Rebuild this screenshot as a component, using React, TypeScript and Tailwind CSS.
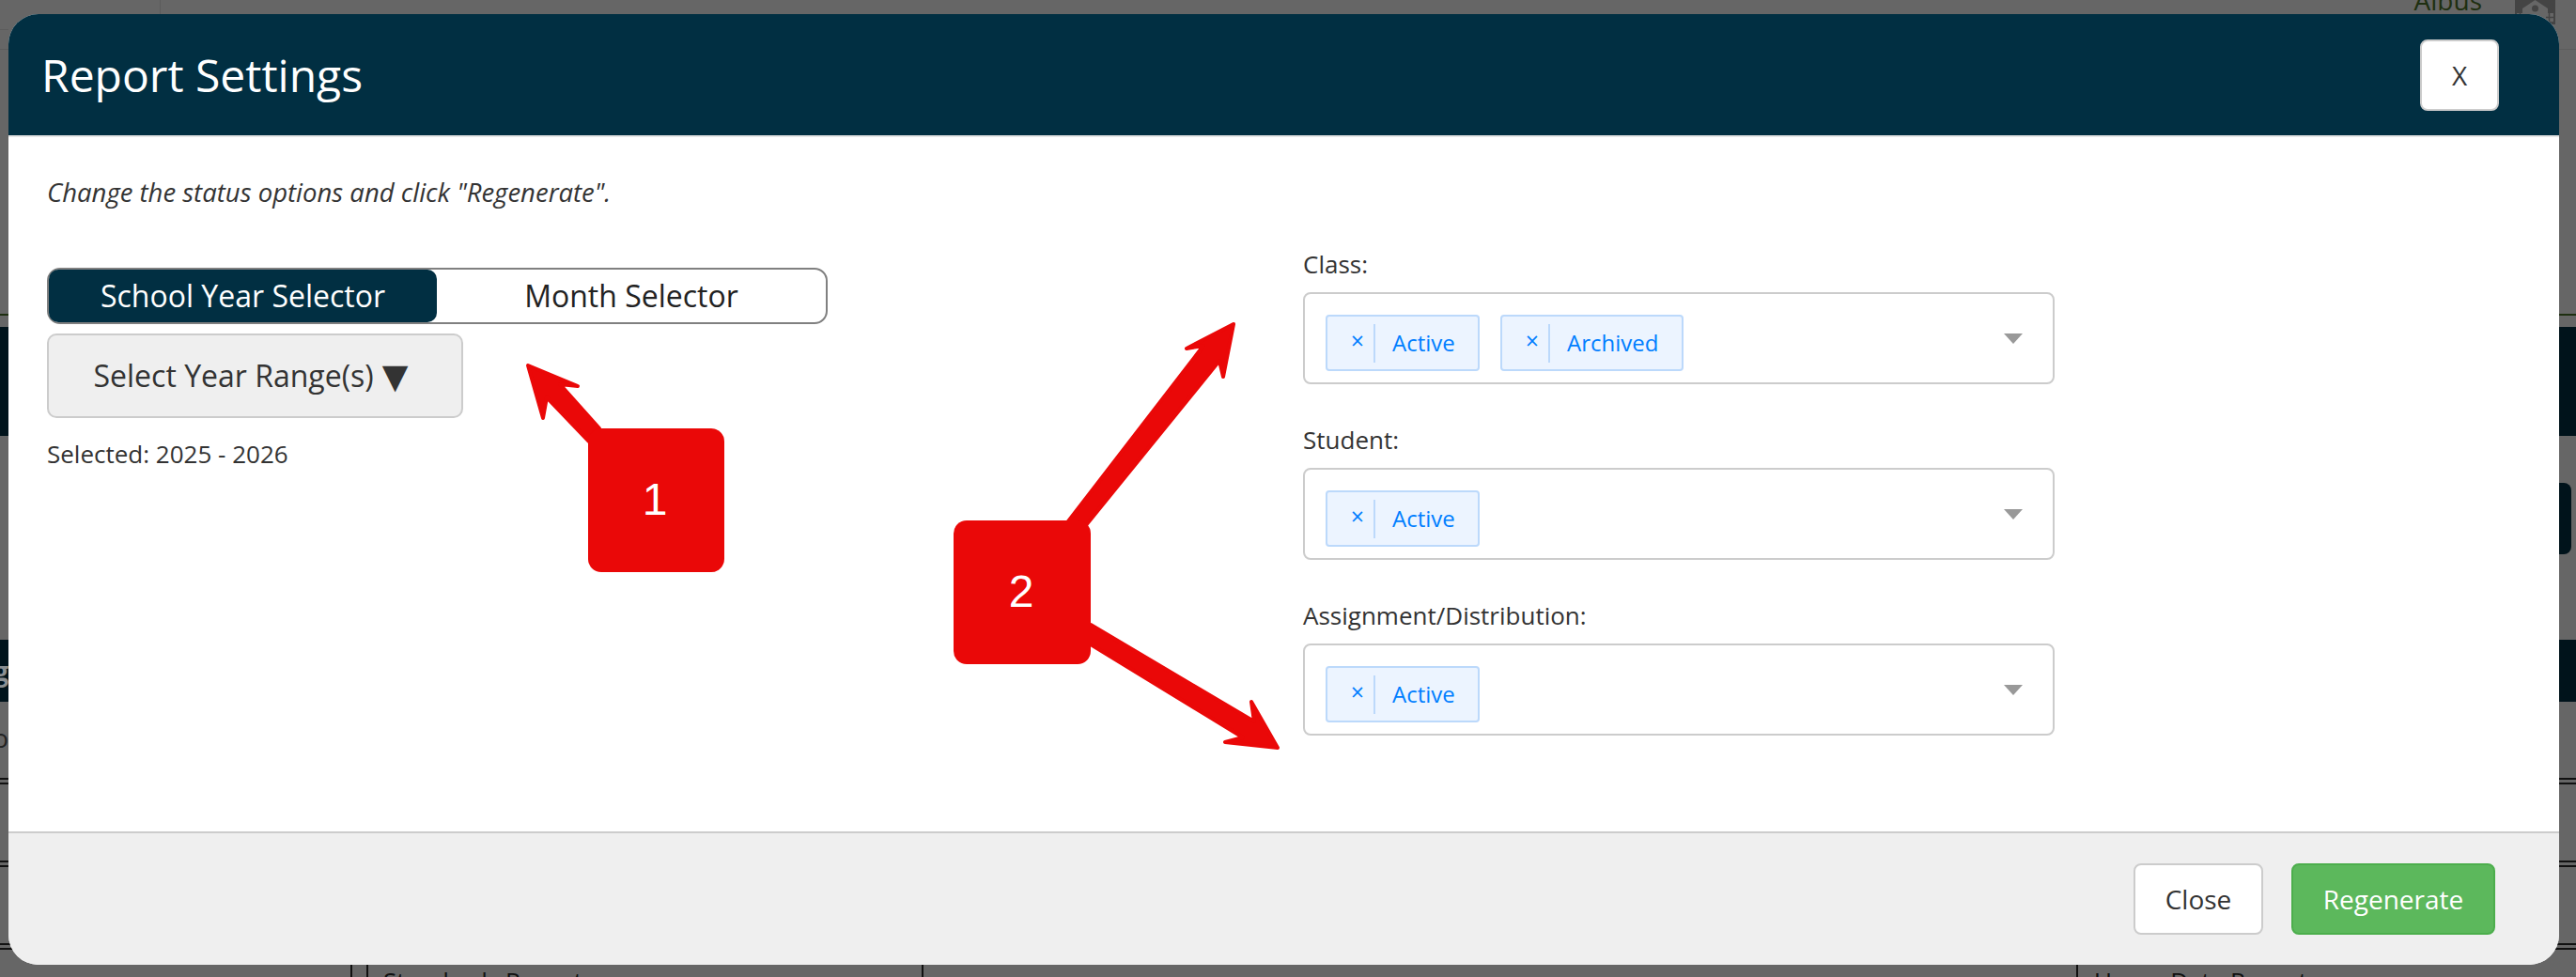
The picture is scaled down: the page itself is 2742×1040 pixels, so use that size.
import React from "react";

const font = { fontFamily: '"Open Sans", "DejaVu Sans", sans-serif' };

function Tag({ label, width }: { label: string; width: string }) {
  return (
    <div className={`flex h-[60px] items-center rounded-[4px] border-2 border-[#bcd9fb] bg-[#ecf4ff] text-[24px] text-[#007eff] ${width}`}>
      <span className="flex h-[41px] w-[51px] items-center justify-center border-r-2 border-[#bcd9fb] pb-[6px] pl-[15px] text-[25px] leading-none">×</span>
      <span className="pl-[18px] leading-none">{label}</span>
    </div>
  );
}

function Field({ label, children }: { label: string; children: React.ReactNode }) {
  return (
    <div className="flex flex-col gap-[12px]">
      <label className="h-[36px] text-[26px] leading-[36px] text-[#333333]">{label}</label>
      <div className="flex h-[98px] w-[800px] items-center rounded-[8px] border-2 border-[#cccccc] bg-white pl-[22px] pr-[32px]">
        <div className="mt-[10px] flex gap-[22px]">{children}</div>
        <span className="ml-auto h-0 w-0 border-x-[10px] border-t-[11px] border-x-transparent border-t-[#999999]" />
      </div>
    </div>
  );
}

function PageBehind() {
  return (
    <div className="absolute inset-0 overflow-hidden bg-[#666666]">
      <span className="absolute right-[100px] top-[-20px] text-[28px] leading-[40px] text-[#1e2f10]">Albus</span>
      <svg className="absolute left-[2677px] top-0" width="43" height="26" viewBox="0 0 43 26">
        <path d="M0 0h43v26H0z" fill="#444444" />
        <path d="M21.5 0 8 9v17h27V9z" fill="#666666" />
        <circle cx="21.5" cy="9" r="3.5" fill="#444444" />
        <path d="M2 14h8v9H2zM33 14h8v9h-8z" fill="#666666" />
        <path d="M36.5 14v9M33 18.5h8M5.5 14v9" stroke="#444444" strokeWidth="1.5" />
      </svg>
      <div className="absolute left-0 right-0 top-[52px] h-px bg-[#5c5c5c]" />
      <div className="absolute left-0 top-[31px] h-px w-[9px] bg-[#5c5c5c]" />
      <div className="absolute left-[170px] top-0 h-[15px] w-px bg-[#5c5c5c]" />
      <div className="absolute left-0 right-0 top-[334px] h-[2px] bg-[#1e2f10]" />
      <div className="absolute left-0 right-0 top-[348px] h-[116px] bg-[#00131b]" />
      <div className="absolute left-[2700px] top-[514px] h-[76px] w-[37px] rounded-[8px] bg-[#00131b]" />
      <div className="absolute left-0 right-0 top-[681px] h-[66px] bg-[#00131b]" />
      <span className="absolute right-[2733px] top-[695px] whitespace-nowrap text-[28px] font-bold leading-[38px] text-[#8a8f92]">Reporting</span>
      <span className="absolute right-[2733px] top-[766px] whitespace-nowrap text-[28px] leading-[38px] text-[#222222]">Info</span>
      {[828, 916, 1004].map((y) => (
        <div key={y} className="absolute left-0 right-0 h-[7px] border-y-2 border-[#111111]" style={{ top: y }} />
      ))}
      {[373, 390, 981, 2210].map((x) => (
        <div key={x} className="absolute top-[1020px] h-[20px] w-[2px] bg-[#111111]" style={{ left: x }} />
      ))}
      <span className="absolute left-[408px] top-[1026px] whitespace-nowrap text-[26px] leading-[36px] text-[#111111]">Standards Reports</span>
      <span className="absolute left-[2229px] top-[1026px] whitespace-nowrap text-[26px] leading-[36px] text-[#111111]">Usage Data Reports</span>
    </div>
  );
}

function Annotations() {
  return (
    <div className="pointer-events-none absolute inset-0 z-20">
      <svg className="absolute inset-0" width="2742" height="1040" viewBox="0 0 2742 1040">
        <g fill="#ea0808" stroke="#ea0808" strokeWidth="4" strokeLinejoin="round">
          <polygon points="562,389 615,411 596,409 638,456 627,470 582,423 578,445" />
          <polygon points="1313,345 1263,371 1281,368 1137,555 1156,559 1298,384 1302,401" />
          <polygon points="1360,796 1332,747 1335,768 1161,665 1161,686 1323,785 1304,790" />
        </g>
      </svg>
      <div className="absolute left-[626px] top-[456px] flex h-[153px] w-[145px] items-center justify-center rounded-[14px] bg-[#ea0808] pb-[2px] pr-[3px] font-['Liberation_Sans',sans-serif] text-[48px] text-white">1</div>
      <div className="absolute left-[1015px] top-[554px] flex h-[153px] w-[146px] items-center justify-center rounded-[14px] bg-[#ea0808] pb-[2px] pr-[2px] font-['Liberation_Sans',sans-serif] text-[48px] text-white">2</div>
    </div>
  );
}

export default function App() {
  return (
    <div className="relative h-[1040px] w-[2742px] overflow-hidden pl-[9px] pt-[15px]" style={font}>
      <PageBehind />
      <div className="relative z-10 flex h-[1012px] w-[2715px] flex-col overflow-hidden rounded-[32px] bg-white">
        <header className="flex h-[131px] items-center justify-between border-b-2 border-[#e5e5e5] bg-[#012f42] pl-[35px] pr-[64px]">
          <h1 className="text-[48px] leading-[58px] text-white">Report Settings</h1>
          <button className="h-[76px] w-[84px] rounded-[8px] border-2 border-[#cccccc] bg-white text-[28px] text-[#333333]">X</button>
        </header>

        <main className="flex-1 pl-[41px] pt-[41px]">
          <p className="text-[27.5px] italic leading-[36px] text-[#333333]">Change the status options and click "Regenerate".</p>
          <div className="mt-[40px] flex items-start">
            <div className="flex w-[1337px] flex-col pt-[22px]">
              <div className="flex h-[60px] w-[831px] rounded-[14px] border-2 border-[#808080] bg-white text-[32px] leading-none">
                <div className="flex w-[413px] items-center justify-center rounded-[10px] bg-[#012f42] text-white">School Year Selector</div>
                <div className="flex flex-1 items-center justify-center text-[#222222]">Month Selector</div>
              </div>
              <button className="mt-[10px] flex h-[90px] w-[443px] items-center justify-center gap-[9px] rounded-[10px] border-2 border-[#cccccc] bg-[#efefef] pr-[9px] text-[32px] text-[#333333]">
                <span>Select Year Range(s)</span>
                <span className="text-[36px] leading-none">▼</span>
              </button>
              <p className="mt-[20px] text-[26px] leading-[36px] text-[#333333]">Selected: 2025 - 2026</p>
            </div>
            <div className="flex flex-col gap-[41px]">
              <Field label="Class:">
                <Tag label="Active" width="w-[164px]" />
                <Tag label="Archived" width="w-[195px]" />
              </Field>
              <Field label="Student:">
                <Tag label="Active" width="w-[164px]" />
              </Field>
              <Field label="Assignment/Distribution:">
                <Tag label="Active" width="w-[164px]" />
              </Field>
            </div>
          </div>
        </main>

        <footer className="flex h-[142px] items-start justify-end gap-[30px] border-t-2 border-[#cccccc] bg-[#efefef] pr-[68px] pt-[32px]">
          <button className="h-[76px] w-[138px] rounded-[8px] border-2 border-[#cccccc] bg-white text-[28px] text-[#333333]">Close</button>
          <button className="h-[76px] w-[217px] rounded-[8px] border-2 border-[#4cae4c] bg-[#5cb85c] text-[28px] text-white">Regenerate</button>
        </footer>
      </div>
      <Annotations />
    </div>
  );
}
